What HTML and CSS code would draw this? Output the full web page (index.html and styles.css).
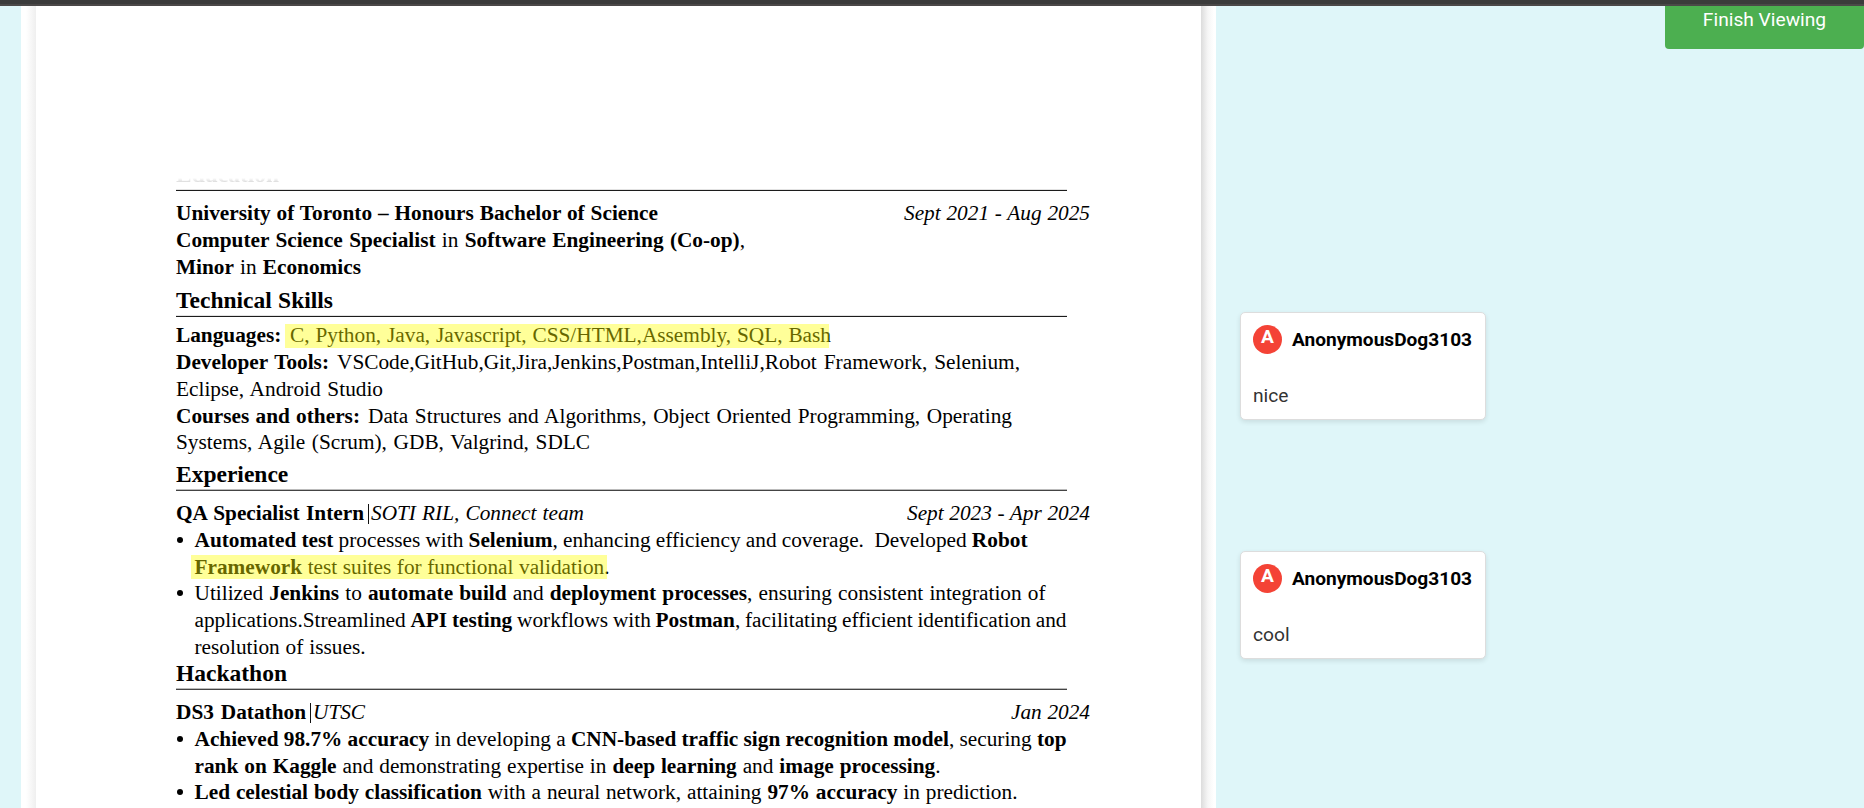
FILE: index.html
```html
<!DOCTYPE html>
<html lang="en">
<head>
<meta charset="utf-8">
<title>Resume review</title>
<link rel="stylesheet" href="styles.css">
</head>
<body>
<div class="topbar"></div>
<div class="workspace">
  <main class="viewer">
    <article class="page">
      <section class="education">
        <h2 class="heading faded"><span style="width:103px">Education</span></h2>
        <div class="entry"><p class="line" style="width:482px"><b>University of Toronto – Honours Bachelor of Science</b></p><i class="date" style="width:186px">Sept 2021 - Aug 2025</i></div>
        <p class="line" style="width:569px"><b>Computer Science Specialist</b> in <b>Software Engineering (Co-op)</b>,</p>
        <p class="line" style="width:185px"><b>Minor</b> in <b>Economics</b></p>
      </section>
      <section class="skills">
        <h2 class="heading"><span style="width:157px">Technical Skills</span></h2>
        <div class="pair"><b class="line label">Languages:</b><p class="line" style="width:541px">C, Python, Java, Javascript, CSS/HTML,Assembly, SQL, Bash</p><div class="highlight languages"></div></div>
        <div class="pair"><b class="line label" style="width:153px">Developer Tools:</b><p class="line" style="width:683px">VSCode,GitHub,Git,Jira,Jenkins,Postman,IntelliJ,Robot Framework, Selenium,</p></div>
        <p class="line" style="width:207px">Eclipse, Android Studio</p>
        <div class="pair"><b class="line label" style="width:184px">Courses and others:</b><p class="line" style="width:644px">Data Structures and Algorithms, Object Oriented Programming, Operating</p></div>
        <p class="line" style="width:414px">Systems, Agile (Scrum), GDB, Valgrind, SDLC</p>
      </section>
      <section class="experience">
        <h2 class="heading"><span>Experience</span></h2>
        <div class="entry"><div class="role"><b class="line" style="width:188px">QA Specialist Intern</b><span class="bar"></span><i class="line" style="width:213px">SOTI RIL, Connect team</i></div><i class="date" style="width:183px">Sept 2023 - Apr 2024</i></div>
        <div class="bullet">
          <p class="line" style="width:833px"><b>Automated test</b> processes with <b>Selenium</b>, enhancing efficiency and coverage.&nbsp; Developed <b>Robot</b></p>
          <p class="line" style="width:415px"><b>Framework</b> test suites for functional validation.</p>
          <div class="highlight framework"></div>
        </div>
        <div class="bullet">
          <p class="line" style="width:851px">Utilized <b>Jenkins</b> to <b>automate build</b> and <b>deployment processes</b>, ensuring consistent integration of</p>
          <p class="line" style="width:872px">applications.Streamlined <b>API testing</b> workflows with <b>Postman</b>, facilitating efficient identification and</p>
          <p class="line" style="width:171px">resolution of issues.</p>
        </div>
      </section>
      <section class="hackathon">
        <h2 class="heading"><span>Hackathon</span></h2>
        <div class="entry"><div class="role"><b class="line" style="width:130px">DS3 Datathon</b><span class="bar"></span><i class="line">UTSC</i></div><i class="date" style="width:79px">Jan 2024</i></div>
        <div class="bullet">
          <p class="line" style="width:872px"><b>Achieved 98.7% accuracy</b> in developing a <b>CNN-based traffic sign recognition model</b>, securing <b>top</b></p>
          <p class="line" style="width:746px"><b>rank on Kaggle</b> and demonstrating expertise in <b>deep learning</b> and <b>image processing</b>.</p>
        </div>
        <div class="bullet">
          <p class="line" style="width:823px"><b>Led celestial body classification</b> with a neural network, attaining <b>97% accuracy</b> in prediction.</p>
        </div>
      </section>
    </article>
  </main>
  <aside class="comments">
    <button class="finish">Finish Viewing</button>
    <div class="card">
      <div class="author"><span class="avatar">A</span><strong>AnonymousDog3103</strong></div>
      <p class="message">nice</p>
    </div>
    <div class="card">
      <div class="author"><span class="avatar">A</span><strong>AnonymousDog3103</strong></div>
      <p class="message">cool</p>
    </div>
  </aside>
</div>
</body>
</html>
```
FILE: styles.css
```css
* { box-sizing: border-box; margin: 0; padding: 0; }
body { height: 808px; overflow: hidden; background: #dff6f9; font-family: Roboto, sans-serif; }
.topbar { height: 6px; background: #3b3b3b; border-bottom: 2px solid #4b4848; }
.workspace { display: flex; height: 802px; overflow: hidden; }

.viewer {
  flex: none; width: 1195px; margin-left: 21px; padding: 0 15px;
  background:
    linear-gradient(to right, #fff 0, #fff 5px, #efefef 15px) left / 15px 100% no-repeat,
    linear-gradient(to right, #dcdcdc 0, #f6f6f6 7px, #fff 13px) right / 15px 100% no-repeat,
    #fff;
}
.page {
  width: 1165px; height: 802px; padding: 154px 0 0 140px; overflow: hidden; background: #fff;
  color: #000; font: 21.3px/26.9px "Liberation Serif", "Times New Roman", serif;
}
.line { display: block; height: 26.9px; white-space: nowrap; text-align: justify; text-align-last: justify; word-spacing: -2.5px; }
.entry { display: flex; justify-content: space-between; width: 914px; height: 26.9px; }
.date { white-space: nowrap; text-align-last: justify; word-spacing: -2.5px; }
.pair { position: relative; display: flex; gap: 8px; }
.pair .label { flex: none; width: 106px; }
.role { display: flex; }
.bar { width: 1px; height: 20px; margin: 4px 2px 0 4px; background: #111; }

.heading { width: 891px; height: 31px; border-bottom: 1px solid #1c1c1c; box-shadow: inset 0 -1px #e2e2e2; font-size: 23.5px; line-height: 27px; }
.heading span { display: block; width: 112px; padding-top: .6px; white-space: nowrap; text-align-last: justify; word-spacing: -2px; }
/* Heading fades out towards the top of its letters */
.faded { margin-bottom: 9px; }
.faded span { background: linear-gradient(transparent 18px, #d4d4d4 23px); -webkit-background-clip: text; background-clip: text; color: transparent; }
.skills { margin-top: 5.7px; }
.skills .heading { margin-bottom: 4.5px; }
.experience { height: 199px; margin-top: 4px; }
.experience .heading, .hackathon .heading { margin-bottom: 8.5px; border-color: #444; box-shadow: inset 0 -1px #bbb; }

.bullet { position: relative; padding-left: 18.5px; }
.bullet::before { content: ""; position: absolute; left: 1px; top: 10px; width: 6px; height: 6px; border-radius: 50%; background: #000; }
.highlight { position: absolute; height: 24px; background: rgba(255, 255, 0, .4); }
.languages { left: 109px; top: 2px; width: 544px; }
.framework { left: 15px; top: 28px; width: 416px; }

.comments { flex: 1; display: flex; flex-direction: column; align-items: flex-start; padding-left: 24px; }
.finish { align-self: flex-end; width: 199px; height: 43px; margin-bottom: 263px; padding-bottom: 16px; border: 0; border-radius: 0 0 4px 4px; background: #4caf50; color: #fff; font: 19.2px/26px Roboto, sans-serif; }
.card { width: 246px; height: 108px; margin-bottom: 131px; padding: 12px; border: 1px solid #ddd; border-radius: 5px; background: #fff; box-shadow: 0 2px 5px rgba(0, 0, 0, .1); }
.author { display: flex; align-items: center; gap: 10px; height: 29px; color: #000; font-size: 19.1px; }
.author strong { font-weight: 700; white-space: nowrap; }
.avatar { flex: none; width: 29px; height: 29px; border-radius: 50%; background: #f44336; color: #fff; font-size: 19.2px; font-weight: 700; line-height: 23px; text-align: center; }
.message { margin-top: 30px; color: #333; font-size: 19.2px; line-height: 24px; }
```
